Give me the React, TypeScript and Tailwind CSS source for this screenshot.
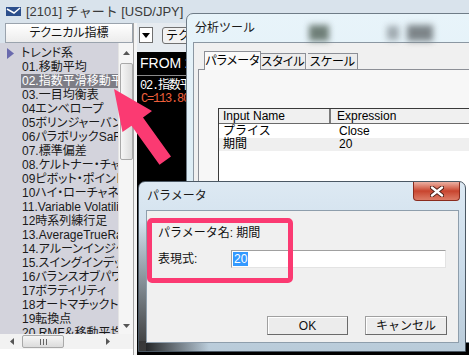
import React from 'react'

const ITEMS = [
  '01.移動平均',
  '02.指数平滑移動平均線',
  '03.一目均衡表',
  '04エンベロープ',
  '05ボリンジャーバンド',
  '06パラボリックSaR',
  '07.標準偏差',
  '08.ケルトナー・チャネル',
  '09ピボット・ポイント',
  '10ハイ・ローチャネル',
  '11.Variable Volatility',
  '12時系列練行足',
  '13.AverageTrueRange',
  '14.アルーンインジケータ',
  '15.スイングインデックス',
  '16バランスオブパワー',
  '17ボラティリティ',
  '18オートマチックトレンド',
  '19転換点',
  '20.RMF＆移動平均線',
]

function Tri({ dir, className = '' }: { dir: 'up' | 'down' | 'left' | 'right'; className?: string }) {
  const pts = {
    up: '0,4 7,4 3.5,0',
    down: '0,0 7,0 3.5,4',
    left: '4,0 4,7 0,3.5',
    right: '0,0 0,7 4,3.5',
  }[dir]
  const w = dir === 'up' || dir === 'down' ? 7 : 4
  const h = dir === 'up' || dir === 'down' ? 4 : 7
  return (
    <svg width={w} height={h} className={className}>
      <polygon points={pts} fill="#555" />
    </svg>
  )
}

function LeftPanel() {
  return (
    <div className="flex w-[133px] flex-col">
      <div className="ml-[5px] flex h-[20px] items-center justify-center border border-[#9aa3ad] bg-gradient-to-b from-white to-[#ececec] text-[12px] text-[#111] [font-feature-settings:'palt']">
        テクニカル指標
      </div>
      <div className="flex h-[291px]">
        <div className="w-[118px] overflow-hidden bg-[#d3d3dc] pt-[3px] text-[12px] leading-[14px] text-[#1a1a1a] [font-feature-settings:'palt']">
          <div className="flex h-[14px] items-center whitespace-nowrap">
            <svg width="7" height="11" className="ml-[7px] mr-[7px]">
              <polygon points="0,0 7,5.5 0,11" fill="#6a6aae" />
            </svg>
            トレンド系
          </div>
          {ITEMS.map((it, i) => (
            <div
              key={it}
              className={`ml-[21px] h-[14px] whitespace-nowrap px-[1px] ${
                i === 1 ? 'bg-[#7d7d86] text-white' : ''
              }`}
            >
              {it}
            </div>
          ))}
        </div>
        <div className="flex w-[15px] flex-col items-center border-l border-[#e4e4e4] bg-[#f5f5f5]">
          <Tri dir="up" className="mt-[8px]" />
          <div className="mt-[8px] h-[97px] w-[13px] rounded-[2px] border border-[#a9a9a9] bg-gradient-to-r from-[#f6f6f6] to-[#dcdcdc]" />
          <div className="flex-1" />
          <Tri dir="down" className="mb-[6px]" />
        </div>
      </div>
      <div className="flex h-[15px]">
        <div className="flex w-[118px] items-center bg-[#f2f2f2]">
          <Tri dir="left" className="ml-[10px]" />
          <div className="ml-[8px] flex h-[13px] w-[42px] items-center justify-center gap-[2px] rounded-[2px] border border-[#a9a9a9] bg-gradient-to-b from-[#f6f6f6] to-[#dcdcdc]">
            <span className="h-[6px] w-[1px] bg-[#666]" />
            <span className="h-[6px] w-[1px] bg-[#666]" />
            <span className="h-[6px] w-[1px] bg-[#666]" />
          </div>
          <div className="flex-1" />
          <Tri dir="right" className="mr-[8px]" />
        </div>
        <div className="flex-1 bg-[#f2f2f2]" />
      </div>
      <div className="flex-1 bg-white" />
    </div>
  )
}

function ChartColumn() {
  return (
    <div className="flex flex-1 flex-col">
      <div className="flex h-[29px] items-start bg-[#e6ebf0] pt-[4px]">
        <div className="ml-[2px] flex h-[16px] w-[14px] items-center justify-center border border-[#6f6f6f] bg-white">
          <svg width="8" height="5">
            <polygon points="0,0 8,0 4,5" fill="#000" />
          </svg>
        </div>
        <div className="ml-[9px] flex h-[17px] items-center whitespace-nowrap rounded-[3px] border border-[#707070] bg-[#f2f2f2] px-[3px] text-[12px]">
          テクニカル
        </div>
      </div>
      <div className="flex flex-1 flex-col bg-black">
        <div className="flex h-[24px] items-center whitespace-nowrap border-b border-[#8a8a8a] pl-[3px] text-[14px] text-white">
          FROM 2015
        </div>
        <div className="mt-[4px] whitespace-nowrap pl-[3px] font-['Liberation_Mono','Noto_Sans_CJK_JP',monospace] text-[12px] leading-[13px] tracking-[-1.2px] text-white">
          02.指数平滑
        </div>
        <div className="whitespace-nowrap pl-[4px] font-['Liberation_Mono',monospace] text-[12px] leading-[13px] tracking-[-1.2px] text-[#f0603c]">
          C=113.805
        </div>
      </div>
    </div>
  )
}

function AnalysisWindow() {
  return (
    <div className="absolute left-[186px] top-[13px] flex h-[330px] w-[300px] flex-col overflow-hidden rounded-tl-[7px] border border-[#6f7c87] bg-gradient-to-b from-[#e8f4fa] to-[#d2e6f1]">
      <div className="relative flex h-[28px] items-center pl-[8px]">
        <div className="absolute left-[122px] top-[11px] h-[16px] w-[20px] bg-[#6f7f78] blur-[3px]" />
        <div className="absolute left-[200px] top-[12px] h-[14px] w-[12px] bg-[#a0aab0] blur-[3px]" />
        <div className="absolute left-[220px] top-[11px] h-[16px] w-[26px] bg-[#7d8589] blur-[3px]" />
        <span className="relative text-[12px] text-[#1a1a1a]">分析ツール</span>
      </div>
      <div className="ml-[6px] flex flex-1 flex-col border-l border-t border-[#8b97a2] bg-[#f0f0f0]">
        <div className="flex h-[26px] items-end whitespace-nowrap pl-[10px] text-[12px] [font-feature-settings:'palt']">
          <div className="relative z-10 -mb-[1px] flex h-[19px] w-[57px] items-center justify-center border border-b-0 border-[#8c8f96] bg-[#fafafa]">
            パラメータ
          </div>
          <div className="flex h-[16px] w-[45px] items-center justify-center border border-b-0 border-l-0 border-[#8c8f96] bg-[#ececec]">
            スタイル
          </div>
          <div className="ml-[2px] flex h-[16px] w-[50px] items-center justify-center border border-b-0 border-l-0 border-[#8c8f96] bg-[#ececec]">
            スケール
          </div>
        </div>
        <div className="ml-[4px] flex flex-1 flex-col border-l border-t border-[#8c8f96] bg-[#f7f7f7] pl-[19px] pt-[38px]">
          <div className="flex flex-1 flex-col border-l border-t border-[#3a3a3a] bg-white">
            <div className="flex h-[15px] border-b border-[#6a6a6a] bg-[#f0f0f0]">
              <div className="flex w-[112px] items-center border-r-2 border-[#7a7a7a] pl-[4px] text-[12px]">
                Input Name
              </div>
              <div className="flex flex-1 items-center pl-[6px] text-[12px]">Expression</div>
            </div>
            <div className="mt-[1px] flex h-[13px] items-center text-[12px] leading-[13px]">
              <div className="w-[112px] pl-[4px]">プライス</div>
              <div className="pl-[8px]">Close</div>
            </div>
            <div className="flex h-[13px] items-center bg-[#efefef] text-[12px] leading-[13px]">
              <div className="w-[112px] pl-[4px]">期間</div>
              <div className="pl-[8px]">20</div>
            </div>
          </div>
        </div>
      </div>
    </div>
  )
}

function Btn({ label }: { label: string }) {
  return (
    <div className="flex h-[19px] items-center justify-center border border-[#a0a0a0] border-b-[#6a6a6a] border-r-[#6a6a6a] bg-[#ececec] text-[12px] shadow-[inset_1px_1px_0_#fff]">
      {label}
    </div>
  )
}

function ParamDialog() {
  return (
    <div className="absolute left-[138px] top-[181px] flex h-[171px] w-[328px] flex-col overflow-hidden rounded-t-[7px] border border-[#4b5864] bg-gradient-to-b from-[#dde9f3] via-[#cbdcea] to-[#b9cbd9]">
      <div className="absolute bottom-0 left-0 h-[10px] w-[70px] bg-gradient-to-r from-[#151515] to-transparent" />
      <div className="absolute bottom-0 left-0 top-[40px] w-[7px] bg-gradient-to-b from-transparent to-[#3a3a3a]" />
      <div className="relative flex h-[28px] items-center pl-[8px]">
        <span className="text-[12px] text-[#1a1a1a]">パラメータ</span>
        <div className="absolute left-[274px] top-[0px] flex h-[19px] w-[47px] items-center justify-center rounded-b-[4px] border border-t-0 border-[#8a2b1e] bg-gradient-to-b from-[#eab0a3] via-[#c8442e] to-[#dc7b66]">
          <svg width="14" height="11" viewBox="0 0 14 11">
            <path d="M2 1.5 L12 9.5 M12 1.5 L2 9.5" stroke="#4a1c14" strokeWidth="4.2" strokeLinecap="round" />
            <path d="M2 1.5 L12 9.5 M12 1.5 L2 9.5" stroke="#fff" strokeWidth="2.4" strokeLinecap="round" />
          </svg>
        </div>
      </div>
      <div className="relative mx-[6px] ml-[7px] flex h-[133px] flex-col border border-[#8e9eac] bg-[#f0f0f0] text-[12px] text-[#111]">
        <div className="ml-[11px] mt-[14px] flex h-[16px] items-center">パラメータ名: 期間</div>
        <div className="mt-[9px] flex h-[18px] items-center">
          <div className="ml-[11px] w-[73px]">表現式:</div>
          <div className="flex h-[18px] w-[215px] items-center border border-[#a0a0a0] border-b-[#e3e3e3] border-r-[#e3e3e3] bg-white pl-[1px]">
            <span className="bg-[#3399ff] px-[1px] leading-[14px] text-white">20</span>
          </div>
        </div>
        <div className="mt-[48px] flex gap-[17px] pl-[120px]">
          <div className="w-[81px]">
            <Btn label="OK" />
          </div>
          <div className="w-[82px]">
            <Btn label="キャンセル" />
          </div>
        </div>
      </div>
      <div className="absolute left-[8px] top-[36px] h-[65px] w-[146px] rounded-[5px] border-[5px] border-[#fb3a72]" />
    </div>
  )
}

export default function App() {
  return (
    <div className="relative h-[355px] w-[469px] overflow-hidden bg-[#d9e3ec] font-['Liberation_Sans','Noto_Sans_CJK_JP',sans-serif] text-[12px] text-black">
      <div className="flex h-[23px] items-center">
        <svg width="15" height="9" className="ml-[6px]">
          <rect x="0" y="0" width="15" height="9" fill="#2c4f8c" />
          <polyline points="1,2 8,6 14,1" fill="none" stroke="#fff" strokeWidth="1.5" />
        </svg>
        <span className="ml-[5px] text-[13px] text-[#3a3a3a]">[2101] チャート [USD/JPY]</span>
      </div>
      <div className="flex h-[332px]">
        <LeftPanel />
        <div className="w-[4px] border-l border-[#a5a5a5] bg-[#f4f4f4]" />
        <ChartColumn />
      </div>
      <AnalysisWindow />
      <ParamDialog />
      <svg className="pointer-events-none absolute left-0 top-0" width="469" height="355">
        <polygon
          points="114,89 152,111 143,117.5 171,156.5 159.5,164.7 131.5,125.7 122.5,132.1"
          fill="#fb3a72"
        />
      </svg>
    </div>
  )
}
